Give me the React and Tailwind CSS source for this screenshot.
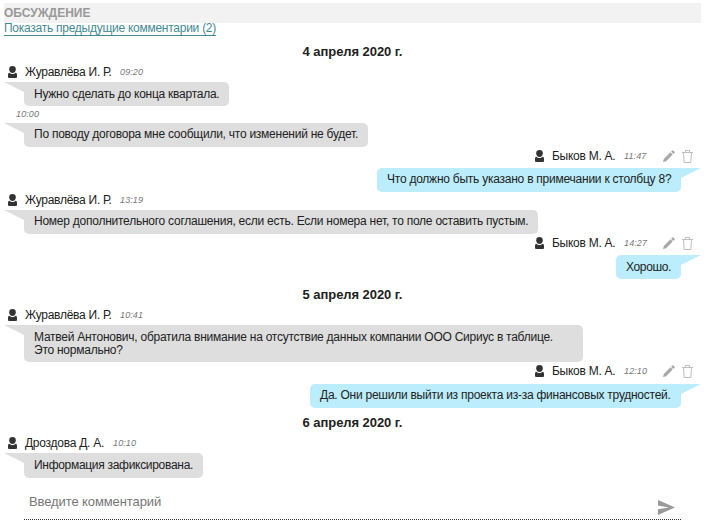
import React from 'react';

function UserIcon() {
  return (
    <svg className="h-3 w-[9px] shrink-0" viewBox="0 0 9 12" fill="#333">
      <path d="M4.5 0C6.7 0 7.8 1.1 7.8 3.2C7.8 5.3 6.4 7 4.5 7C2.6 7 1.2 5.3 1.2 3.2C1.2 1.1 2.3 0 4.5 0Z" />
      <path d="M1.4 6.8C2.3 7.7 3.3 8.1 4.5 8.1C5.7 8.1 6.7 7.7 7.6 6.8C8.7 7.1 9 7.8 9 9.3V10.5C9 11.5 8.5 12 7.5 12H1.5C.5 12 0 11.5 0 10.5V9.3C0 7.8.3 7.1 1.4 6.8Z" />
    </svg>
  );
}

function PencilIcon() {
  return (
    <svg className="h-3 w-3 shrink-0" viewBox="0 0 12 12" fill="#a8a8a8">
      <path d="M.8 8.9L7.4 2.3L9.7 4.6L3.1 11.2L0 12ZM8.1 1.6L9.3.4Q9.8 0 10.2.4L11.6 1.8Q12 2.2 11.6 2.7L10.4 3.9Z" />
    </svg>
  );
}

function TrashIcon() {
  return (
    <svg className="h-[13px] w-[11px] shrink-0" viewBox="0 0 11 13" fill="none" stroke="#bdbdbd">
      <path d="M0 2.5H11M3.5 2.5V.5H7.5V2.5M1.5 3L2.2 12.5H8.8L9.5 3" />
    </svg>
  );
}

function DateRow({ children, className }) {
  return <div className={`flex items-center justify-center text-[13px] font-bold tracking-[-0.06px] ${className}`}>{children}</div>;
}

function Author({ name, time, nameWidth, className }) {
  return (
    <div className={`flex items-center pl-1 ${className}`}>
      <UserIcon />
      <span className={`ml-2 whitespace-nowrap tracking-[-0.26px] ${nameWidth}`}>{name}</span>
      <Time>{time}</Time>
    </div>
  );
}

function Time({ children }) {
  return <span className="w-6 whitespace-nowrap text-[9px] italic tracking-[0.12px] text-[#777]">{children}</span>;
}

function OwnAuthor({ time, className }) {
  return (
    <div className={`flex items-center justify-end pr-2 ${className}`}>
      <UserIcon />
      <span className="ml-2 w-[72px] whitespace-nowrap tracking-[-0.26px]">Быков М. А.</span>
      <Time>{time}</Time>
      <span className="ml-[15px]"><PencilIcon /></span>
      <span className="ml-[7px]"><TrashIcon /></span>
    </div>
  );
}

function Bubble({ children, className }) {
  return (
    <div className="flex items-start">
      <svg className="h-3 w-5 shrink-0" viewBox="0 0 20 12"><path d="M0 0H20V10Z" fill="#dedede" /></svg>
      <div className={`rounded-[5px] rounded-tl-none bg-[#dedede] pl-2.5 leading-[13px] whitespace-nowrap ${className}`}>{children}</div>
    </div>
  );
}

function OwnBubble({ children, className }) {
  return (
    <div className="flex h-6 items-start justify-end">
      <div className={`h-6 rounded-[5px] rounded-tr-none bg-[#bbedfd] pl-2.5 leading-[13px] whitespace-nowrap ${className}`}>{children}</div>
      <svg className="h-3 w-5 shrink-0" viewBox="0 0 20 12"><path d="M0 0H20L0 10Z" fill="#bbedfd" /></svg>
    </div>
  );
}

export default function App() {
  return (
    <main className="h-[528px] w-[705px] overflow-hidden bg-white pl-1 pr-1 pt-[3px] font-['Liberation_Sans',Arial,sans-serif] text-[12px] leading-[14px] text-[#222]">
      <h1 className="h-5 bg-[#f2f2f2] pt-[3px] text-[12px] font-bold leading-[14px] text-[#999]">ОБСУЖДЕНИЕ</h1>
      <div className="h-[18px]">
        <a className="block h-[13px] w-[212px] border-b border-[#438b94] text-[12px] leading-[11px] tracking-[-0.26px] whitespace-nowrap text-[#438b94]">Показать предыдущие комментарии (2)</a>
      </div>
      <DateRow className="h-[21px]">4 апреля 2020 г.</DateRow>
      <Author name="Журавлёва И. Р." time="09:20" nameWidth="w-[95px]" className="h-5" />
      <Bubble className="h-6 w-[205px] pt-1.5 tracking-[-0.25px]">Нужно сделать до конца квартала.</Bubble>
      <div className="flex h-[17px] items-center pb-px pl-3"><Time>10:00</Time></div>
      <Bubble className="h-6 w-[344px] pt-[5px] tracking-[-0.25px]">По поводу договора мне сообщили, что изменений не будет.</Bubble>
      <OwnAuthor time="11:47" className="h-[21px] pb-[3px]" />
      <OwnBubble className="w-[304px] pt-[5px] tracking-[-0.24px]">Что должно быть указано в примечании к столбцу 8?</OwnBubble>
      <Author name="Журавлёва И. Р." time="13:19" nameWidth="w-[95px]" className="h-[18px] pb-0.5" />
      <Bubble className="h-6 w-[514px] pt-[5px] tracking-[-0.245px]">Номер дополнительного соглашения, если есть. Если номера нет, то поле оставить пустым.</Bubble>
      <OwnAuthor time="14:27" className="h-[21px] pb-[3px]" />
      <OwnBubble className="w-[65px] pt-1.5 tracking-[-0.35px]">Хорошо.</OwnBubble>
      <DateRow className="h-[30px] pt-px">5 апреля 2020 г.</DateRow>
      <Author name="Журавлёва И. Р." time="10:41" nameWidth="w-[95px]" className="h-4 pb-[5px]" />
      <Bubble className="h-[37px] w-[559px] pt-1.5 tracking-[-0.25px]">Матвей Антонович, обратила внимание на отсутствие данных компании ООО Сириус в таблице.<br />Это нормально?</Bubble>
      <OwnAuthor time="12:10" className="h-[22px] pb-[4px]" />
      <OwnBubble className="w-[371px] pt-[5px] tracking-[-0.25px]">Да. Они решили выйти из проекта из-за финансовых трудностей.</OwnBubble>
      <DateRow className="h-[29px]">6 апреля 2020 г.</DateRow>
      <Author name="Дроздова Д. А." time="10:10" nameWidth="w-[88px]" className="h-4 pb-1" />
      <Bubble className="h-[25px] w-[179px] pt-1.5 tracking-[-0.3px]">Информация зафиксирована.</Bubble>
      <div className="ml-5 flex h-[42px] w-[657px] justify-between border-b border-dotted border-[#333] pl-[5px]">
        <span className="pt-4 text-[13px] leading-4 tracking-[-0.1px] text-[#777]">Введите комментарий</span>
        <svg className="mr-1.5 mt-[22px] h-[15px] w-[17px]" viewBox="0 0 17 15" fill="#999"><path d="M0 0L17 7.4L0 15V9.3L11 7.4L0 5.6Z" /></svg>
      </div>
    </main>
  );
}
